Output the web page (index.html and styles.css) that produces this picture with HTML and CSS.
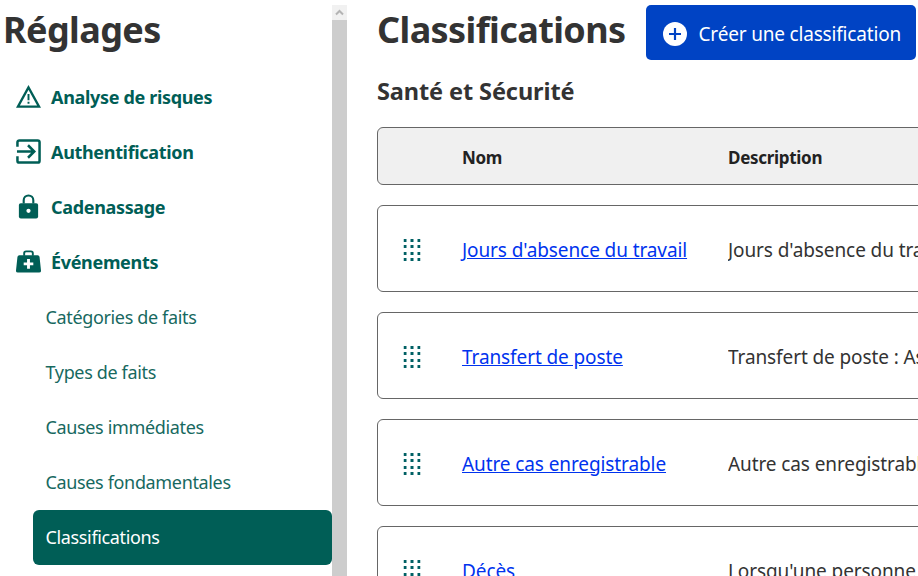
FILE: index.html
```html
<!DOCTYPE html>
<html lang="fr">
<head>
<meta charset="utf-8">
<title>Classifications</title>
<link rel="stylesheet" href="styles.css">
</head>
<body>
<div class="page">
  <aside class="sidebar">
    <div class="side-content">
      <h1 class="side-title">Réglages</h1>
      <nav class="nav">
        <a class="nav-item top">
          <svg class="nav-icon" viewBox="0 0 26 24"><path d="M13 2.500 2 22.500h22z" fill="none" stroke="#005e56" stroke-width="2.400" stroke-linejoin="miter"/><path d="M12 9.500h2v6.500h-2zM12 17.500h2v2h-2z" fill="#005e56"/></svg>
          <span>Analyse de risques</span>
        </a>
        <a class="nav-item top">
          <svg class="nav-icon" viewBox="0 0 26 26"><path d="M1.500 8V3.500a2 2 0 0 1 2-2h19a2 2 0 0 1 2 2v19a2 2 0 0 1-2 2h-19a2 2 0 0 1-2-2V18" fill="none" stroke="#005e56" stroke-width="2.600"/><path d="M1 13h17M12.500 6.500 19 13l-6.500 6.500" fill="none" stroke="#005e56" stroke-width="2.600"/></svg>
          <span>Authentification</span>
        </a>
        <a class="nav-item top">
          <svg class="nav-icon" viewBox="0 0 26 26"><path d="M8 10V6.500a5 5 0 0 1 10 0V10" fill="none" stroke="#005e56" stroke-width="2.200"/><rect x="3" y="9.500" width="20" height="16" rx="2" fill="#005e56"/><circle cx="13" cy="17.500" r="2.200" fill="#fff"/></svg>
          <span>Cadenassage</span>
        </a>
        <a class="nav-item top">
          <svg class="nav-icon" viewBox="0 0 26 24"><path d="M8.500 6V3.500a2 2 0 0 1 2-2h5a2 2 0 0 1 2 2V6" fill="none" stroke="#005e56" stroke-width="2"/><path d="M3.500 5.500h19a2 2 0 0 1 2 1.800l1.500 14a2 2 0 0 1-2 2.200H2a2 2 0 0 1-2-2.200l1.500-14a2 2 0 0 1 2-1.800z" fill="#005e56"/><path d="M11.500 9.500h3v3.500H18v3h-3.500v3.500h-3V16H8v-3h3.500z" fill="#fff"/></svg>
          <span>Événements</span>
        </a>
        <a class="nav-item sub">Catégories de faits</a>
        <a class="nav-item sub">Types de faits</a>
        <a class="nav-item sub">Causes immédiates</a>
        <a class="nav-item sub">Causes fondamentales</a>
        <a class="nav-item sub active">Classifications</a>
      </nav>
    </div>
    <div class="scrollbar">
      <div class="scroll-btn"><svg viewBox="0 0 15 15" width="15" height="15"><path d="M4 9.500 7.500 6 11 9.500" fill="none" stroke="#b4b4b4" stroke-width="2"/></svg></div>
      <div class="scroll-thumb"></div>
    </div>
  </aside>
  <main class="main">
    <header class="head">
      <h1 class="title">Classifications</h1>
      <button class="create">
        <svg class="plus" viewBox="0 0 22 22"><circle cx="11" cy="11" r="11" fill="#fff"/><path d="M10 5.500h2V10h4.500v2H12v4.500h-2V12H5.500v-2H10z" fill="#0043c4"/></svg>
        <span>Créer une classification</span>
      </button>
    </header>
    <h2 class="section">Santé et Sécurité</h2>
    <div class="grid-row header-row">
      <div class="cell-drag"></div>
      <div class="cell-name">Nom</div>
      <div class="cell-desc">Description</div>
    </div>
    <div class="grid-row data-row">
      <div class="cell-drag"><svg class="drag" viewBox="0 0 17 22"><use href="#dots"/></svg></div>
      <div class="cell-name"><a class="link">Jours d'absence du travail</a></div>
      <div class="cell-desc">Jours d'absence du travail : Toute blessure entraînant</div>
    </div>
    <div class="grid-row data-row">
      <div class="cell-drag"><svg class="drag" viewBox="0 0 17 22"><use href="#dots"/></svg></div>
      <div class="cell-name"><a class="link">Transfert de poste</a></div>
      <div class="cell-desc">Transfert de poste : Assignation à un autre poste</div>
    </div>
    <div class="grid-row data-row">
      <div class="cell-drag"><svg class="drag" viewBox="0 0 17 22"><use href="#dots"/></svg></div>
      <div class="cell-name"><a class="link">Autre cas enregistrable</a></div>
      <div class="cell-desc">Autre cas enregistrable : Toute blessure nécessitant</div>
    </div>
    <div class="grid-row data-row">
      <div class="cell-drag"><svg class="drag" viewBox="0 0 17 22"><use href="#dots"/></svg></div>
      <div class="cell-name"><a class="link">Décès</a></div>
      <div class="cell-desc">Lorsqu'une personne décède à la suite d'un accident</div>
    </div>
  </main>
</div>
<svg class="defs" width="0" height="0">
  <defs>
    <g id="dots" fill="#006064">
      <rect x="0" y="0" width="3" height="3"/><rect x="7" y="0" width="3" height="3"/><rect x="14" y="0" width="3" height="3"/>
      <rect x="0" y="6" width="3" height="3"/><rect x="7" y="6" width="3" height="3"/><rect x="14" y="6" width="3" height="3"/>
      <rect x="0" y="13" width="3" height="3"/><rect x="7" y="13" width="3" height="3"/><rect x="14" y="13" width="3" height="3"/>
      <rect x="0" y="19" width="3" height="3"/><rect x="7" y="19" width="3" height="3"/><rect x="14" y="19" width="3" height="3"/>
    </g>
  </defs>
</svg>
</body>
</html>
```
FILE: styles.css
```css
* { box-sizing: border-box; }
html, body { margin: 0; padding: 0; height: 100%; overflow: hidden; background: #fff; }
body { font-family: "Noto Sans", "Open Sans", sans-serif; color: #333; }
.page { display: flex; height: 576px; width: 918px; overflow: hidden; }
.sidebar { display: flex; flex: 0 0 347px; height: 576px; }
.side-content { flex: 1; min-width: 0; }
.side-title { margin: 0; padding: 5px 0 0 3px; height: 70px; font-size: 36px; line-height: 50px; font-weight: 700; color: #333; letter-spacing: -0.6px; }
.nav { display: flex; flex-direction: column; }
.nav-item { display: flex; align-items: center; height: 55px; padding-bottom: 2px; color: #17695f; white-space: nowrap; }
.nav-item.top { padding-left: 16px; gap: 10px; font-size: 18px; font-weight: 700; letter-spacing: -0.33px; color: #005e56; }
.nav-icon { width: 25px; height: 25px; flex: none; }
.nav-item.sub { margin-left: 33px; padding-left: 12.500px; font-size: 18px; letter-spacing: -0.35px; border-radius: 6px; }
.nav-item.active { background: #005e56; color: #fff; }
.scrollbar { flex: 0 0 15px; padding-top: 5px; display: flex; flex-direction: column; }
.scroll-btn { height: 15px; background: #f1f1f1; }
.scroll-btn svg { display: block; }
.scroll-thumb { flex: 1; background: #cdcdcd; }
.main { flex: 1; min-width: 0; padding: 5px 0 0 30px; overflow: hidden; }
.head { display: flex; align-items: flex-start; gap: 20px; height: 55px; }
.title { margin: 0; font-size: 36px; line-height: 50px; font-weight: 700; color: #333; white-space: nowrap; letter-spacing: -0.6px; }
.create { display: flex; align-items: center; gap: 12px; height: 55px; width: 270px; flex: none; padding: 2px 0 0 17px; border: 0; border-radius: 5px; background: #0043c4; color: #fff; font: inherit; font-size: 19px; letter-spacing: -0.18px; white-space: nowrap; }
.plus { width: 24px; height: 24px; flex: none; }
.section { margin: 14px 0 19px; height: 34px; font-size: 23.500px; line-height: 34px; font-weight: 700; color: #333; letter-spacing: -0.1px; white-space: nowrap; }
.grid-row { display: flex; align-items: center; width: 640px; border: 1px solid #666; border-radius: 6px; white-space: nowrap; font-size: 19px; letter-spacing: -0.1px; padding-top: 2px; }
.header-row { height: 58px; margin-bottom: 20px; background: #f0f0f0; font-size: 17px; font-weight: 700; color: #222; letter-spacing: -0.3px; }
.data-row { height: 87px; margin-bottom: 20px; color: #333; }
.cell-drag { flex: 0 0 84px; padding-left: 25px; display: flex; align-items: center; }
.cell-name { flex: 0 0 266px; }
.cell-desc { flex: 1; overflow: hidden; }
.drag { width: 17px; height: 22px; display: block; transform: translateX(0.500px); }
.link { color: #0033ee; text-decoration: underline; }
.defs { position: absolute; }
```
